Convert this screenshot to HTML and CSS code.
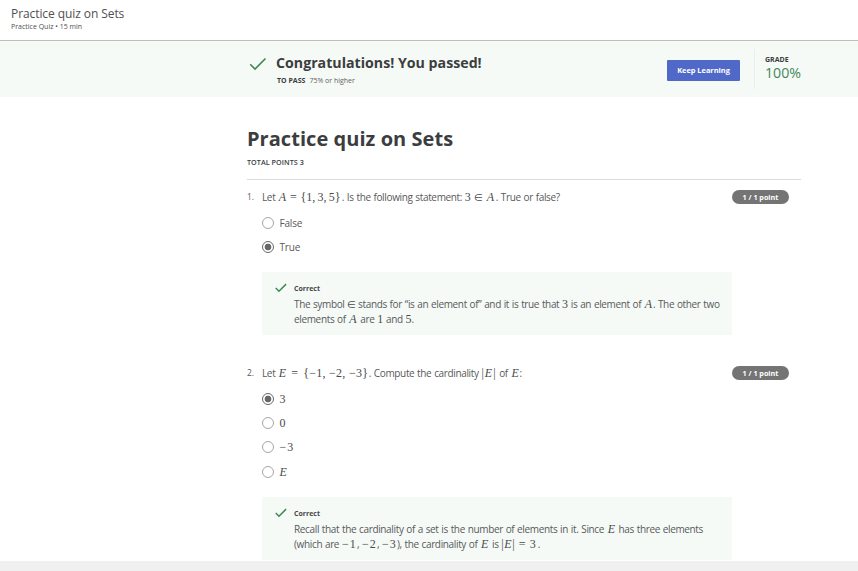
FILE: index.html
```html
<!DOCTYPE html>
<html lang="en">
<head>
<meta charset="utf-8">
<title>Practice quiz on Sets</title>
<link rel="stylesheet" href="styles.css">
</head>
<body>
<header class="topbar">
  <div class="topbar-title">Practice quiz on Sets</div>
  <div class="topbar-meta">Practice Quiz • 15 min</div>
</header>
<section class="banner">
  <svg class="banner-check" viewBox="0 0 18 14"><path d="M1.2 7.2 6 12 16.5 1.5"/></svg>
  <div class="banner-text">
    <h2>Congratulations! You passed!</h2>
    <p><b>TO PASS</b><span>75% or higher</span></p>
  </div>
  <button class="keep">Keep Learning</button>
  <div class="grade"><b>GRADE</b><span>100%</span></div>
</section>
<main class="quiz">
  <h1>Practice quiz on Sets</h1>
  <p class="total">TOTAL POINTS 3</p>
  <section class="question">
    <div class="number">1.</div>
    <div class="body">
      <div class="prompt">Let <span class="math m-set-a"><i>A</i> <span class="rel">=</span> {1, 3, 5}</span>. Is the following statement: <span class="math m-in-a">3 <span class="in">∈</span> <i>A</i></span>. True or false?</div>
      <div class="option"><span class="radio"></span><span>False</span></div>
      <div class="option"><span class="radio checked"></span><span>True</span></div>
      <div class="feedback">
        <svg class="check" viewBox="0 0 13 10"><path d="M.8 5 4.3 8.5 12 .8"/></svg>
        <div><b>Correct</b>
          <p>The symbol <span class="math m-in"><span class="in">∈</span></span> stands for “is an element of” and it is true that <span class="math">3</span> is an element of <span class="math m-var"><i>A</i></span>. The other two</p>
          <p>elements of <span class="math m-var"><i>A</i></span> are <span class="math">1</span> and <span class="math">5</span>.</p>
        </div>
      </div>
    </div>
    <div class="points">1 / 1 point</div>
  </section>
  <section class="question">
    <div class="number">2.</div>
    <div class="body">
      <div class="prompt">Let <span class="math m-set-e"><i>E</i> <span class="rel">=</span> {−1, −2, −3}</span>. Compute the cardinality <span class="math m-card">|<i>E</i>|</span> of <span class="math m-var"><i>E</i></span>:</div>
      <div class="option"><span class="radio checked"></span><span class="math">3</span></div>
      <div class="option"><span class="radio"></span><span class="math">0</span></div>
      <div class="option"><span class="radio"></span><span class="math m-neg">−3</span></div>
      <div class="option"><span class="radio"></span><span class="math"><i>E</i></span></div>
      <div class="feedback">
        <svg class="check" viewBox="0 0 13 10"><path d="M.8 5 4.3 8.5 12 .8"/></svg>
        <div><b>Correct</b>
          <p>Recall that the cardinality of a set is the number of elements in it. Since <span class="math m-var"><i>E</i></span> has three elements</p>
          <p>(which are <span class="math m-neg">−1</span>, <span class="math m-neg">−2</span>, <span class="math m-neg">−3</span>), the cardinality of <span class="math m-var"><i>E</i></span> is <span class="math m-card-eq">|<i>E</i>| = 3</span>.</p>
        </div>
      </div>
    </div>
    <div class="points">1 / 1 point</div>
  </section>
</main>
<footer class="bottom"></footer>
</body>
</html>
```
FILE: styles.css
```css
* { box-sizing: border-box; }
body { margin: 0; height: 571px; overflow: hidden; display: flex; flex-direction: column; background: #fff; color: #58595b; font-family: "Open Sans", sans-serif; font-size: 10px; }
h1, h2, p { margin: 0; }
.topbar { height: 41px; flex: none; padding: 6px 11px 0; border-bottom: 1px solid #bdbdbd; color: #505050; }
.topbar-title { font-size: 12px; line-height: 16px; letter-spacing: -0.08px; }
.topbar-meta { font-size: 7px; line-height: 10px; }
.banner { height: 56px; flex: none; background: #f5faf7; display: flex; padding-left: 249px; color: #3b3d3e; }
.banner-check { width: 18px; height: 14px; margin-top: 16px; flex: none; }
svg path { fill: none; stroke: #3e8854; stroke-width: 1.6; }
.banner-text { width: 391px; margin-left: 9px; padding-top: 12px; }
.banner h2 { font-size: 14.2px; line-height: 20px; font-weight: 700; white-space: nowrap; }
.banner-text p { font-size: 7px; line-height: 10px; margin: 3px 0 0 1px; }
.banner-text p span { margin-left: 4px; color: #606263; }
.keep { width: 73px; height: 21px; margin-top: 19px; padding: 0 0 1px; border: 0; border-radius: 1px; background: #5069c8; color: #fff; font: 700 7.4px "Open Sans", sans-serif; }
.grade { margin: 8px 0 0 14px; height: 40px; padding: 6px 0 0 10px; border-left: 1px solid #e9edeb; display: flex; flex-direction: column; }
.grade b { font-size: 7px; line-height: 10px; }
.grade span { font-size: 14.2px; line-height: 15px; color: #438657; }
.quiz { width: 554px; height: 464px; flex: none; margin-left: 247px; overflow: hidden; }
.quiz h1 { margin-top: 28px; font-size: 20px; line-height: 28px; color: #3b3d3e; letter-spacing: .05px; }
.total { margin-top: 4px; font-size: 7.2px; line-height: 10px; font-weight: 600; color: #3b3d3e; height: 23px; border-bottom: 1px solid #dcdcdc; letter-spacing: .05px; }
.question { display: grid; grid-template-columns: 15px 470px 57px; height: 176px; padding-top: 10px; }
.question + .question { height: 240px; }
.number { font-size: 8.4px; line-height: 14px; }
.prompt { height: 15px; line-height: 15px; margin-bottom: 5.6px; white-space: nowrap; letter-spacing: -.35px; word-spacing: .5px; }
.option { display: flex; align-items: center; height: 24.3px; gap: 6px; line-height: 16px; letter-spacing: -.2px; }
.radio { width: 12px; height: 12px; border: 1px solid #a6a6a6; border-radius: 50%; margin-left: -.5px; }
.radio.checked { border-color: #686868; background: radial-gradient(circle, #686868 0 3px, transparent 3.7px); }
.feedback { display: flex; gap: 7px; width: 470px; height: 63px; margin-top: 13px; padding: 11px 0 0 13px; background: #f5faf7; white-space: nowrap; letter-spacing: -.35px; word-spacing: .5px; }
.feedback .check { width: 12px; height: 10px; flex: none; }
.feedback b { display: block; font-size: 7px; line-height: 11px; margin-bottom: 3px; color: #454748; letter-spacing: 0; }
.feedback p { height: 15px; line-height: 15px; }
.points { height: 14px; margin-top: .4px; border-radius: 7px; background: #747474; color: #fff; text-align: center; font-size: 7.2px; line-height: 14px; font-weight: 700; }
.math { font-family: "Liberation Serif", serif; font-size: 12px; line-height: 1; letter-spacing: 0; word-spacing: 0; display: inline-block; white-space: nowrap; color: #484a4b; }
.rel { margin: 0 1.5px; }
.in { font-size: 9.5px; }
.prompt .math:first-child { margin-left: .7px; }
.m-set-a { width: 63px; word-spacing: -.75px; }
.m-in-a { width: 31px; word-spacing: .5px; }
.m-in { width: 8px; }
.m-var { width: 9px; text-align: center; }
.m-set-e { width: 90px; word-spacing: .3px; letter-spacing: .2px; }
.m-card { width: 15px; letter-spacing: 1px; }
.m-neg { width: 15px; letter-spacing: 1px; }
.m-card-eq { width: 36.5px; letter-spacing: .6px; }
.bottom { height: 10px; flex: none; background: #f0f0f0; }
```
